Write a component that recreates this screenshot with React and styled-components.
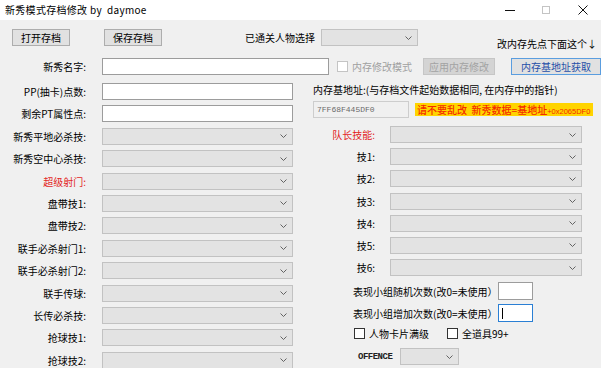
import React from "react";
import styled, { createGlobalStyle } from "styled-components";

const GlobalStyle = createGlobalStyle`
  html, body {
    margin: 0;
    padding: 0;
  }
  body {
    width: 601px;
    height: 368px;
    overflow: hidden;
    background: #f0f0f0;
    font-family: "Noto Sans CJK SC", "Noto Sans", sans-serif;
    font-size: 10px;
    color: #000;
  }
`;

const LEFT_ROWS = [
  { label: "新秀平地必杀技:" },
  { label: "新秀空中心杀技:" },
  { label: "超级射门:", red: true },
  { label: "盘带技1:" },
  { label: "盘带技2:" },
  { label: "联手必杀射门1:" },
  { label: "联手必杀射门2:" },
  { label: "联手传球:" },
  { label: "长传必杀技:" },
  { label: "抢球技1:" },
  { label: "抢球技2:" },
];

const SKILL_ROWS = [
  { label: "队长技能:", red: true },
  { label: "技1:" },
  { label: "技2:" },
  { label: "技3:" },
  { label: "技4:" },
  { label: "技5:" },
  { label: "技6:" },
];

const Chevron = () => (
  <svg width="7" height="4" viewBox="0 0 7 4">
    <polyline points="0.5,0.5 3.5,3.5 6.5,0.5" fill="none" stroke="#555" strokeWidth="0.9" />
  </svg>
);

const Combo = ({ width }) => (
  <ComboBox $width={width}>
    <Chevron />
  </ComboBox>
);

const App = () => {
  return (
    <Window>
      <GlobalStyle />
      <TitleBar>
        <Title>新秀模式存档修改 by&nbsp; daymoe</Title>
        <Controls>
          <ControlButton>
            <svg width="10" height="10" viewBox="0 0 10 10">
              <line x1="0" y1="5.5" x2="10" y2="5.5" stroke="#111" strokeWidth="1" />
            </svg>
          </ControlButton>
          <ControlButton>
            <svg width="10" height="10" viewBox="0 0 10 10">
              <rect x="1.5" y="1.5" width="7" height="7" fill="none" stroke="#c4c4c4" strokeWidth="1" />
            </svg>
          </ControlButton>
          <ControlButton>
            <svg width="10" height="10" viewBox="0 0 10 10">
              <path d="M0.5 0.5 L9.5 9.5 M9.5 0.5 L0.5 9.5" stroke="#111" strokeWidth="1" />
            </svg>
          </ControlButton>
        </Controls>
      </TitleBar>

      <Body>
        <Toolbar>
          <Button $width={58}>打开存档</Button>
          <Button $width={58} style={{ marginLeft: 34 }}>保存存档</Button>
          <ToolLabel>已通关人物选择</ToolLabel>
          <Combo width={97} />
          <Note>改内存先点下面这个↓</Note>
        </Toolbar>

        <Main>
          <LeftCol>
            <FieldRow $first>
              <Label>新秀名字:</Label>
              <TextBox $width={227} />
            </FieldRow>
            <FieldRow>
              <Label>PP(抽卡)点数:</Label>
              <TextBox $width={191} />
            </FieldRow>
            <FieldRow>
              <Label>剩余PT属性点:</Label>
              <TextBox $width={191} />
            </FieldRow>
            {LEFT_ROWS.map((row) => (
              <FieldRow key={row.label}>
                <Label $red={row.red}>{row.label}</Label>
                <Combo width={191} />
              </FieldRow>
            ))}
          </LeftCol>

          <RightCol>
            <MemRow>
              <CheckBox $disabled />
              <CheckText $disabled>内存修改模式</CheckText>
              <Button $width={72} $disabled style={{ marginLeft: 11 }}>应用内存修改</Button>
              <Button $width={90} $primary style={{ marginLeft: 16 }}>内存基地址获取</Button>
            </MemRow>
            <InfoText>内存基地址:(与存档文件起始数据相同, 在内存中的指针)</InfoText>
            <AddressRow>
              <ReadOnlyBox>7FF68F445DF0</ReadOnlyBox>
              <Warning>
                请不要乱改&nbsp; 新秀数据=基地址<small>+0x2065DF0</small>
              </Warning>
            </AddressRow>

            <SkillList>
              {SKILL_ROWS.map((row) => (
                <SkillRow key={row.label}>
                  <Label $red={row.red}>{row.label}</Label>
                  <Combo width={192} />
                </SkillRow>
              ))}
            </SkillList>

            <CounterList>
              <CounterRow>
                <span>表现小组随机次数(改0=未使用）</span>
                <SmallBox />
              </CounterRow>
              <CounterRow>
                <span>表现小组增加次数(改0=未使用）</span>
                <SmallBox $focused>
                  <Caret />
                </SmallBox>
              </CounterRow>
            </CounterList>

            <CheckRow>
              <CheckBox />
              <CheckText>人物卡片满级</CheckText>
              <CheckBox style={{ marginLeft: 18 }} />
              <CheckText>全道具99+</CheckText>
            </CheckRow>

            <OffenceRow>
              <OffenceLabel>OFFENCE</OffenceLabel>
              <Combo width={59} />
            </OffenceRow>
          </RightCol>
        </Main>
      </Body>
    </Window>
  );
};

const Window = styled.div`
  width: 601px;
  height: 368px;
  display: flex;
  flex-direction: column;
  background: #f0f0f0;
`;

const TitleBar = styled.div`
  height: 20px;
  flex: none;
  background: #fff;
  display: flex;
  align-items: center;
  padding-left: 5px;
`;

const Title = styled.div`
  font-size: 10px;
  line-height: 12px;
  white-space: nowrap;
  letter-spacing: 0.3px;
  margin-top: -1px;
`;

const Controls = styled.div`
  margin-left: auto;
  display: flex;
  height: 20px;
`;

const ControlButton = styled.div`
  width: 36.5px;
  height: 20px;
  display: flex;
  align-items: center;
  justify-content: center;
`;

const Body = styled.div`
  flex: 1;
  display: flex;
  flex-direction: column;
`;

const Toolbar = styled.div`
  display: flex;
  align-items: flex-start;
  height: 17px;
  padding: 9px 4px 0 12px;
`;

const Button = styled.div`
  box-sizing: border-box;
  width: ${(p) => p.$width}px;
  height: 17px;
  flex: none;
  display: flex;
  align-items: center;
  justify-content: center;
  font-size: 10px;
  white-space: nowrap;
  background: ${(p) => (p.$disabled ? "#d4d4d4" : "#e1e1e1")};
  border: 1px solid ${(p) => (p.$primary ? "#5a9ddf" : p.$disabled ? "#c6c6c6" : "#adadad")};
  color: ${(p) => (p.$disabled ? "#a3a3a3" : p.$primary ? "#1f4fa8" : "#000")};
`;

const ToolLabel = styled.div`
  margin-left: 83px;
  line-height: 17px;
  white-space: nowrap;
  margin-right: 6px;
`;

const ComboBox = styled.div`
  box-sizing: border-box;
  width: ${(p) => p.$width}px;
  height: 17px;
  flex: none;
  background: #e3e3e3;
  border: 1px solid #c2c2c2;
  display: flex;
  align-items: center;
  justify-content: flex-end;
  padding-right: 5px;
`;

const Note = styled.div`
  margin-left: auto;
  margin-top: 9px;
  line-height: 12px;
  white-space: nowrap;
`;

const Main = styled.div`
  display: grid;
  grid-template-columns: 313px 1fr;
  margin-top: 12px;
`;

const LeftCol = styled.div`
  display: flex;
  flex-direction: column;
  gap: 5.4px;
`;

const FieldRow = styled.div`
  display: grid;
  grid-template-columns: 86px auto;
  column-gap: 16px;
  align-items: center;
  height: 17px;
  margin-bottom: ${(p) => (p.$first ? "2.6px" : "0")};
`;

const Label = styled.div`
  text-align: right;
  white-space: nowrap;
  line-height: 17px;
  color: ${(p) => (p.$red ? "#e3261f" : "#000")};
`;

const TextBox = styled.div`
  box-sizing: border-box;
  width: ${(p) => p.$width}px;
  height: 17px;
  background: #fff;
  border: 1px solid #9c9c9c;
`;

const RightCol = styled.div`
  display: flex;
  flex-direction: column;
`;

const MemRow = styled.div`
  display: flex;
  align-items: center;
  height: 17px;
  padding-left: 24px;
`;

const CheckBox = styled.div`
  box-sizing: border-box;
  width: 11px;
  height: 11px;
  flex: none;
  background: #fff;
  border: 1px solid ${(p) => (p.$disabled ? "#c4c4c4" : "#333")};
`;

const CheckText = styled.span`
  margin-left: 4px;
  white-space: nowrap;
  color: ${(p) => (p.$disabled ? "#a0a0a0" : "#000")};
`;

const InfoText = styled.div`
  margin-top: 8px;
  line-height: 14px;
  white-space: nowrap;
`;

const AddressRow = styled.div`
  display: flex;
  align-items: center;
  margin-top: 4px;
  height: 17px;
`;

const ReadOnlyBox = styled.div`
  box-sizing: border-box;
  width: 96px;
  height: 17px;
  background: #f0f0f0;
  border: 1px solid #cdcdcd;
  padding-left: 3px;
  display: flex;
  align-items: center;
  font-family: "Liberation Mono", monospace;
  font-size: 8px;
  color: #6a6a6a;
`;

const Warning = styled.div`
  margin-left: 6px;
  height: 13px;
  line-height: 13px;
  padding: 0 3px 0 2px;
  background: #ffd400;
  color: #f32b00;
  font-weight: 500;
  white-space: nowrap;

  small {
    font-size: 7.5px;
    font-family: "Liberation Sans", sans-serif;
  }
`;

const SkillList = styled.div`
  display: flex;
  flex-direction: column;
  gap: 5.2px;
  margin-top: 8px;
`;

const SkillRow = styled.div`
  display: grid;
  grid-template-columns: 62px auto;
  column-gap: 15px;
  align-items: center;
  height: 17px;
`;

const CounterList = styled.div`
  display: flex;
  flex-direction: column;
  gap: 4px;
  margin-top: 6px;
  padding-left: 40px;
`;

const CounterRow = styled.div`
  display: grid;
  grid-template-columns: 145px 35px;
  align-items: center;
  height: 18px;
  white-space: nowrap;
`;

const SmallBox = styled.div`
  box-sizing: border-box;
  width: 35px;
  height: 18px;
  background: #fff;
  border: 1px solid ${(p) => (p.$focused ? "#2a7fd4" : "#9c9c9c")};
  display: flex;
  align-items: center;
  padding-left: 3px;
`;

const Caret = styled.span`
  width: 1px;
  height: 11px;
  background: #000;
`;

const CheckRow = styled.div`
  display: flex;
  align-items: center;
  height: 13px;
  margin-top: 5px;
  padding-left: 41px;
`;

const OffenceRow = styled.div`
  display: flex;
  align-items: center;
  margin-top: 8px;
  padding-left: 45px;
  gap: 8px;
`;

const OffenceLabel = styled.span`
  width: 34px;
  font-family: "Liberation Mono", monospace;
  font-weight: bold;
  font-size: 9px;
  letter-spacing: -0.5px;
  color: #222;
`;

export default App;
